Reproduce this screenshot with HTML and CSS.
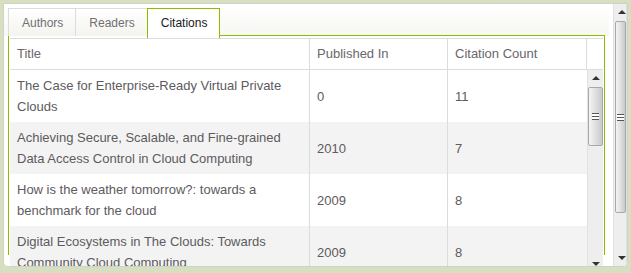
FILE: index.html
```html
<!DOCTYPE html>
<html>
<head>
  <meta charset="UTF-8">
  <title>Citations</title>
  <link rel="stylesheet" href="styles.css">
</head>
<body>
  <div class="panel">
    <div class="main">
      <ul class="tabs">
        <li class="tab">Authors</li>
        <li class="tab">Readers</li>
        <li class="tab active">Citations</li>
      </ul>

      <div class="tab-content">
        <div class="grid">
          <div class="grid-head">
            <div class="cell col-title">Title</div>
            <div class="cell col-pub">Published In</div>
            <div class="cell col-count">Citation Count</div>
            <div class="cell col-gutter"></div>
          </div>
          <div class="grid-body">
            <div class="rows">
              <div class="row">
                <div class="cell col-title">The Case for Enterprise-Ready Virtual Private Clouds</div>
                <div class="cell col-pub">0</div>
                <div class="cell col-count">11</div>
              </div>
              <div class="row alt">
                <div class="cell col-title">Achieving Secure, Scalable, and Fine-grained Data Access Control in Cloud Computing</div>
                <div class="cell col-pub">2010</div>
                <div class="cell col-count">7</div>
              </div>
              <div class="row">
                <div class="cell col-title">How is the weather tomorrow?: towards a benchmark for the cloud</div>
                <div class="cell col-pub">2009</div>
                <div class="cell col-count">8</div>
              </div>
              <div class="row alt">
                <div class="cell col-title">Digital Ecosystems in The Clouds: Towards Community Cloud Computing</div>
                <div class="cell col-pub">2009</div>
                <div class="cell col-count">8</div>
              </div>
            </div>
            <div class="scrollbar inner">
              <span class="arrow up"></span>
              <span class="thumb"><i></i></span>
              <span class="arrow down"></span>
            </div>
          </div>
        </div>
      </div>
    </div>

    <div class="scrollbar outer">
      <span class="arrow up"></span>
      <span class="thumb"><i></i></span>
      <span class="arrow down"></span>
    </div>
  </div>
</body>
</html>
```

FILE: styles.css
```css
body {
  margin: 0;
  padding: 3px 3px 0 3px;
  background-color: #d7dfc1;
  font-family: "Liberation Sans", Arial, sans-serif;
  font-size: 13px;
  color: #5e5a5e;
}
.panel {
  display: flex;
  height: 262px;
  background-color: white;
  border: 1px solid #cfd3c6;
  border-radius: 0 0 5px 5px;
  overflow: hidden;
}
.main {
  flex: 1;
  background: linear-gradient(#ffffff 0, #f6f6f2 32px, #ffffff 32px);
}
.tabs {
  display: flex;
  list-style: none;
  margin: 0;
  padding: 4px 0 0 4px;
  height: 28px;
}
.tab {
  padding: 0 12px 0 13px;
  line-height: 28px;
  font-size: 12px;
  color: #707070;
  border: 1px solid #dcdcdc;
  border-bottom: none;
  border-right: none;
  background: linear-gradient(#ffffff, #f3f3ef);
}
.tab.active {
  color: #1a1a1a;
  background: white;
  border: 1px solid #8dbb00;
  border-bottom: none;
  position: relative;
  z-index: 1;
  height: 29px;
}
.tab-content {
  margin: -1px 4px 0 4px;
  border: 1px solid #8dbb00;
  border-bottom: none;
  height: 217px;
  padding: 2px 1px 0 1px;
}
.grid {
  border-top: 1px solid #dcdcdc;
  height: 230px;
}
.grid-head {
  display: flex;
  height: 30px;
  border-bottom: 1px solid #dcdcdc;
  color: #6a666a;
}
.grid-head .cell {
  line-height: 30px;
  padding: 0 7px;
  border-right: 1px solid #dcdcdc;
  box-sizing: border-box;
}
.col-title { width: 300px; }
.col-pub { width: 138px; }
.col-count { width: 139px; }
.col-gutter { width: 16px; }
.grid-head .col-gutter { border-right: none; }
.grid-body {
  display: flex;
}
.rows {
  width: 577px;
}
.row {
  display: flex;
  height: 52px;
  background-color: white;
}
.row.alt {
  background-color: #f3f3f3;
}
.row .cell {
  box-sizing: border-box;
  padding: 5px 7px;
  line-height: 21px;
  border-right: 1px solid #dcdcdc;
  display: flex;
  align-items: center;
}
.row .col-count {
  border-right: none;
}
.scrollbar {
  position: relative;
  background-color: #eeeeee;
  border-left: 1px solid #e2e2e2;
}
.scrollbar.inner {
  width: 15px;
  height: 200px;
}
.scrollbar.outer {
  width: 16px;
  margin-left: 4px;
  border-right: 1px solid #e2e2e2;
}
.arrow {
  position: absolute;
  left: 4px;
  width: 0;
  height: 0;
  border-left: 4px solid transparent;
  border-right: 4px solid transparent;
}
.arrow.up {
  top: 6px;
  border-bottom: 4px solid #333;
}
.arrow.down {
  bottom: 6px;
  border-top: 4px solid #333;
}
.scrollbar.inner .arrow.down { bottom: 4px; }
.thumb {
  position: absolute;
  left: 0;
  right: 0;
  border: 1px solid #a9a9a9;
  border-radius: 2px;
  background: linear-gradient(to right, #f4f4f4, #dcdcdc 60%, #c9c9c9);
  display: flex;
  align-items: center;
  justify-content: center;
}
.scrollbar.inner .thumb {
  top: 17px;
  height: 57px;
}
.scrollbar.outer .thumb {
  top: 17px;
  height: 190px;
  left: 1px;
}
.thumb i {
  display: block;
  width: 7px;
  height: 5px;
  border-top: 1px solid #555;
  border-bottom: 1px solid #555;
  background: linear-gradient(#ffffff 2px, #555 2px, #555 3px, #ffffff 3px);
}
```
